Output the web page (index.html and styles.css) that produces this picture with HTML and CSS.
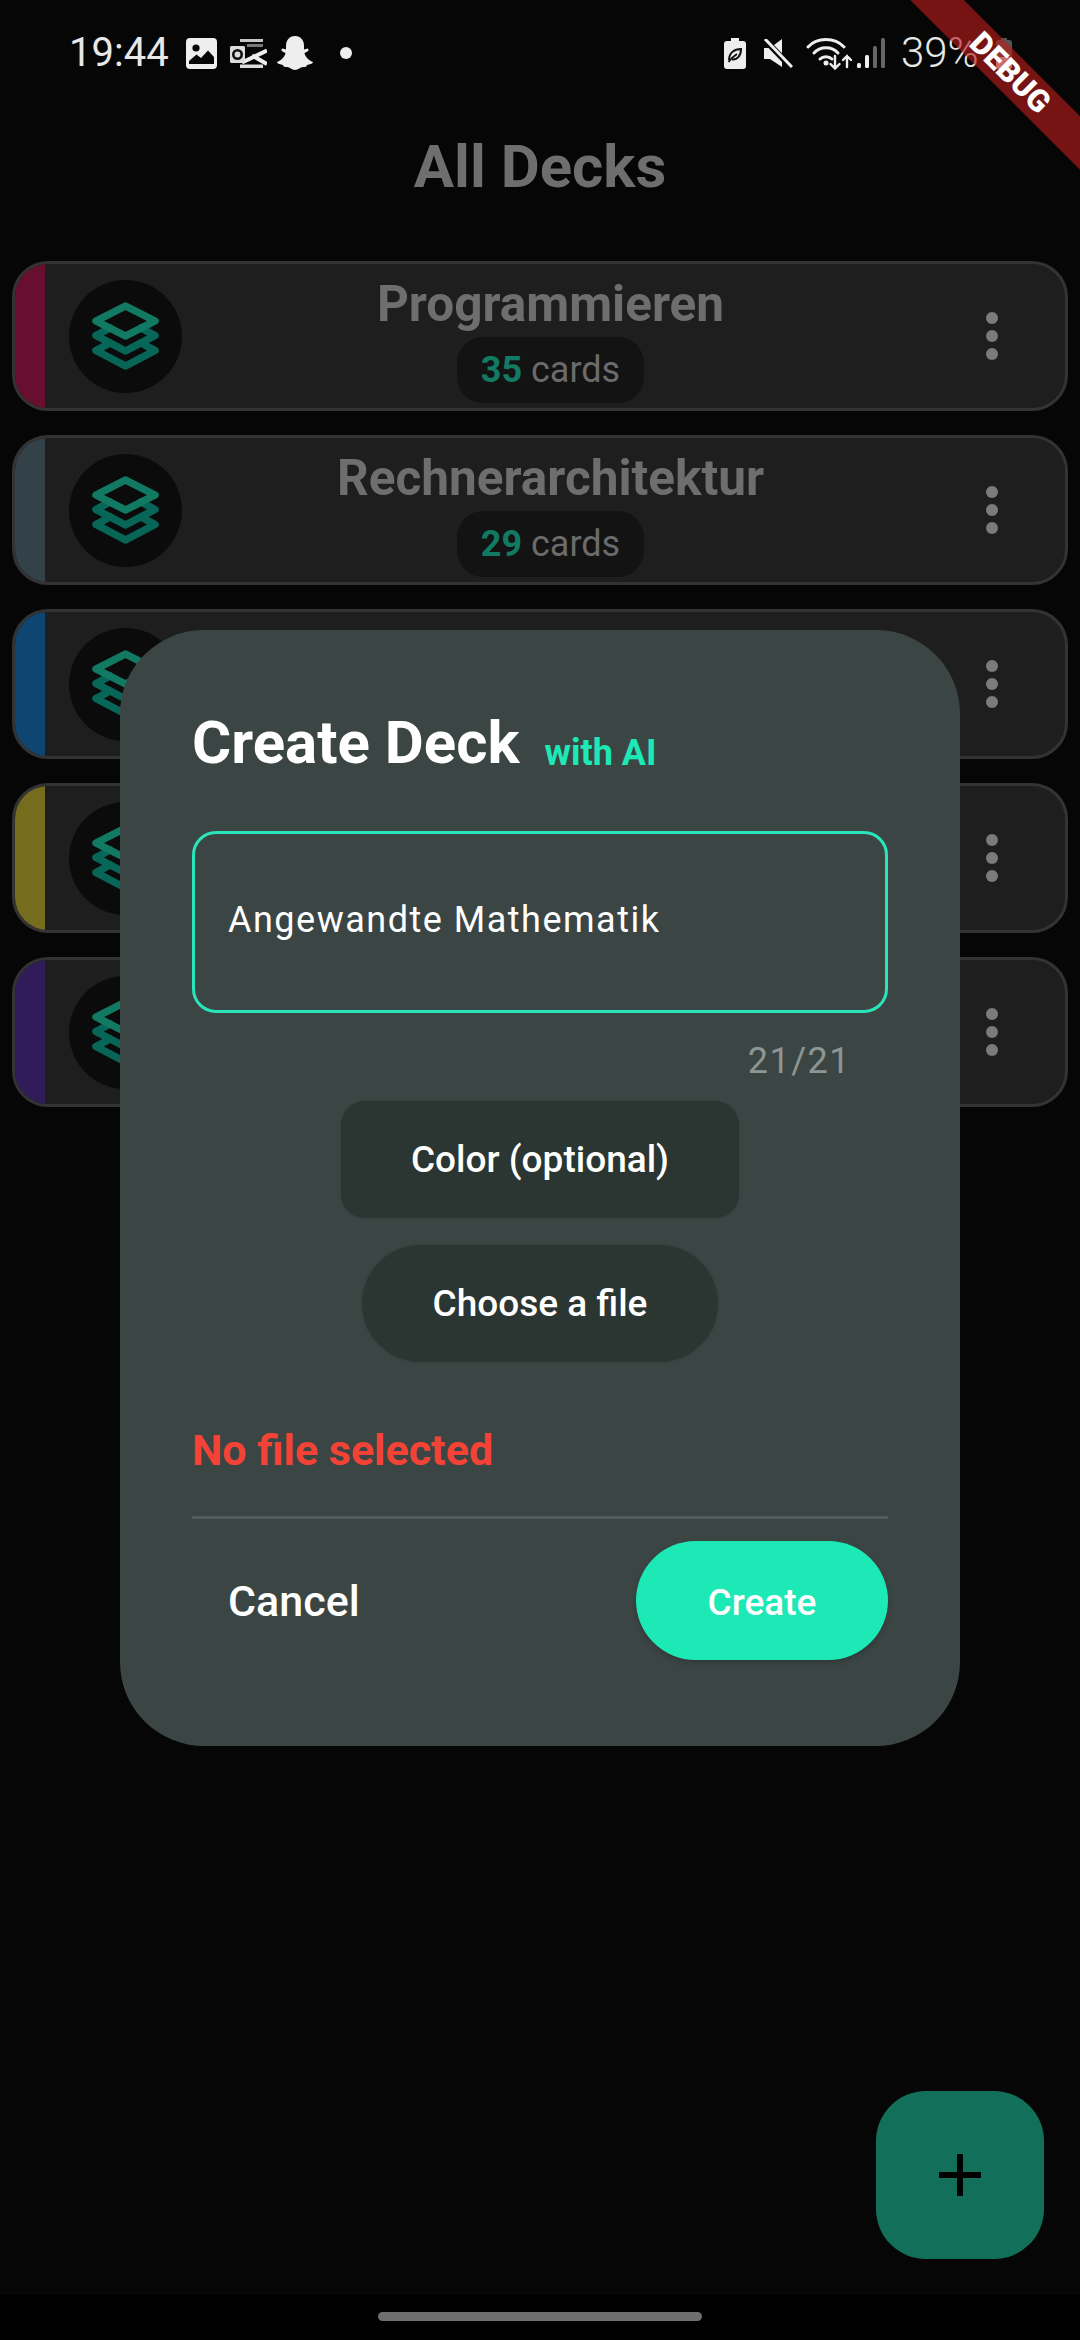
FILE: index.html
```html
<!DOCTYPE html>
<html lang="en">
<head>
<meta charset="utf-8">
<title>All Decks</title>
<link rel="stylesheet" href="styles.css">
</head>
<body>
<div class="screen">
  <header class="status">
    <div class="status-left">
      <span class="clock">19:44</span>
      <svg class="ic-gallery" viewBox="0 0 31 31"><rect width="31" height="31" rx="4" fill="#eee"/><circle cx="10" cy="10" r="3.6" fill="#060606"/><path d="M3 26 V23 L10.5 16.5 L15 20 L22 12.5 L28 19 V26 Z" fill="#060606"/></svg>
      <svg class="ic-outlook" viewBox="0 0 37 29"><path d="M10 0H33V3H10Z" fill="#c4c4c4"/><path d="M17 5H33V8H17Z" fill="#777"/><path d="M12 23.500L37 11.500M22 16.500L37 25" fill="none" stroke="#eee" stroke-width="4"/><path d="M10 25.500H33V29H10Z" fill="#ddd"/><rect y="7" width="15" height="17" rx="1.500" fill="#ddd"/><circle cx="7.500" cy="15.500" r="4.200" fill="none" stroke="#111" stroke-width="2.600"/></svg>
      <svg class="ic-snap" viewBox="0 0 36 34"><path d="M18 0C24 0 27 4.500 27 10V13.500L30.500 12.500C32 13 32 15 30 15.800L27.500 17C28 20.500 31 24 36 26C35.500 28 32.500 28.500 30 29C29.500 31 28.500 31 26 31C23 31 21.500 34 18 34C14.500 34 13 31 10 31C7.500 31 6.500 31 6 29C3.500 28.500 .5 28 0 26C5 24 8 20.500 8.500 17L6 15.800C4 15 4 13 5.500 12.500L9 13.500V10C9 4.500 12 0 18 0Z" fill="#eee"/></svg>
      <span class="note-dot"></span>
    </div>
    <div class="status-right">
      <svg class="ic-leaf" viewBox="0 0 22 31"><path d="M7 0H15V3H19C21 3 22 4 22 6V28C22 30 21 31 19 31H3C1 31 0 30 0 28V6C0 4 1 3 3 3H7Z" fill="#eee"/><path d="M5 22C5 15 10 11 17 11C17 18 13 22 8 21.500M4.500 24C7 20 10 18 13 16" fill="none" stroke="#111" stroke-width="2"/></svg>
      <svg class="ic-mute" viewBox="0 0 30 29"><path d="M1 9H7L19 0V28L7 20H1Z" fill="#eee"/><path d="M2 1L28 28" stroke="#060606" stroke-width="6"/><path d="M2 0L29 28" stroke="#eee" stroke-width="3"/></svg>
      <svg class="ic-wifi" viewBox="0 0 46 33"><g fill="none" stroke="#eee" stroke-linecap="round"><path d="M2 10C11 0 29 0 38 10" stroke-width="3"/><path d="M8 16C14 9 26 9 32 16" stroke-width="3"/><path d="M14 22C17 19 23 19 26 22" stroke-width="3"/><path d="M29 19V31M24.500 27L29 31.500L33.500 27M41 30V19M37 23L41 19L45 23" stroke-width="2.400"/></g><circle cx="20" cy="26" r="2.500" fill="#eee"/></svg>
      <svg class="ic-signal" viewBox="0 0 28 30"><rect y="25" width="4" height="5" rx="1.500" fill="#eee"/><rect x="8" y="17" width="4" height="13" rx="1.500" fill="#eee"/><rect x="16" y="8" width="4" height="22" rx="1.500" fill="#666"/><rect x="24" width="4" height="30" rx="1.500" fill="#666"/></svg>
      <span class="percent">39%</span>
      <svg class="ic-battery" viewBox="0 0 16 31"><path d="M5 0H11V2H13C15 2 16 3 16 5V28C16 30 15 31 13 31H3C1 31 0 30 0 28V5C0 3 1 2 3 2H5Z" fill="#555"/><path d="M0 19H16V28C16 30 15 31 13 31H3C1 31 0 30 0 28Z" fill="#eee"/></svg>
    </div>
  </header>

  <h1 class="page-title">All Decks</h1>

  <main class="deck-list">
    <article class="deck">
      <div class="stripe stripe-magenta"></div>
      <div class="deck-icon"><svg viewBox="0 0 67 68"><use href="#stack"/></svg></div>
      <div class="deck-info">
        <h2 class="deck-name">Programmieren</h2>
        <div class="count"><b>35</b> cards</div>
      </div>
      <div class="menu"><i></i><i></i><i></i></div>
    </article>
    <article class="deck">
      <div class="stripe stripe-slate"></div>
      <div class="deck-icon"><svg viewBox="0 0 67 68"><use href="#stack"/></svg></div>
      <div class="deck-info">
        <h2 class="deck-name">Rechnerarchitektur</h2>
        <div class="count"><b>29</b> cards</div>
      </div>
      <div class="menu"><i></i><i></i><i></i></div>
    </article>
    <article class="deck">
      <div class="stripe stripe-blue"></div>
      <div class="deck-icon"><svg viewBox="0 0 67 68"><use href="#stack"/></svg></div>
      <div class="deck-info"></div>
      <div class="menu"><i></i><i></i><i></i></div>
    </article>
    <article class="deck">
      <div class="stripe stripe-olive"></div>
      <div class="deck-icon"><svg viewBox="0 0 67 68"><use href="#stack"/></svg></div>
      <div class="deck-info"></div>
      <div class="menu"><i></i><i></i><i></i></div>
    </article>
    <article class="deck">
      <div class="stripe stripe-purple"></div>
      <div class="deck-icon"><svg viewBox="0 0 67 68"><use href="#stack"/></svg></div>
      <div class="deck-info"></div>
      <div class="menu"><i></i><i></i><i></i></div>
    </article>
  </main>

  <footer class="nav-bar"><span class="home-pill"></span></footer>

  <button class="fab"><svg viewBox="0 0 42 42"><path d="M21 0V42M0 21H42" stroke="#000" stroke-width="6"/></svg></button>

  <section class="dialog">
    <div class="dialog-head">
      <span class="dialog-title">Create Deck</span>
      <span class="dialog-ai">with AI</span>
    </div>
    <div class="field"><span class="field-text">Angewandte Mathematik</span></div>
    <div class="counter">21/21</div>
    <div class="btn btn-color">Color (optional)</div>
    <div class="btn btn-file">Choose a file</div>
    <div class="file-error">No file selected</div>
    <div class="divider"></div>
    <div class="actions">
      <span class="cancel">Cancel</span>
      <span class="create">Create</span>
    </div>
  </section>

  <div class="debug-band">DEBUG</div>
</div>

<svg class="defs" width="0" height="0">
  <defs>
    <g id="stack" fill="none" stroke-width="7.500" stroke-linejoin="round" stroke-linecap="round">
      <path d="M18 41L4 48.500L33.500 64L63 48.500L49 41" stroke="#086659"/>
      <path d="M18 26L4 33.500L33.500 49L63 33.500L49 26" stroke="#086659"/>
      <path d="M33.500 4L63 19L33.500 34L4 19Z" stroke="#127a62"/>
    </g>
  </defs>
</svg>
</body>
</html>
```
FILE: styles.css
```css
* { box-sizing: border-box; }
html, body { margin: 0; padding: 0; background: #060606; }
body { font-family: Roboto, "Liberation Sans", sans-serif; }

.screen {
  position: relative;
  width: 1080px;
  height: 2340px;
  overflow: hidden;
  background: #060606;
  display: flex;
  flex-direction: column;
}

/* status bar */
.status {
  height: 106px;
  padding: 31px 68px 0 69px;
  display: flex;
  justify-content: space-between;
  align-items: flex-start;
  color: #e8e8e8;
}
.status-left, .status-right { display: flex; align-items: center; height: 44px; }
.clock { font-size: 40px; line-height: 44px; font-weight: 400; width: 117px; }
.percent { font-size: 42px; line-height: 44px; font-weight: 300; margin-left: 16px; width: 95px; }
.ic-gallery { width: 31px; height: 31px; }
.ic-outlook { width: 37px; height: 29px; margin-left: 13px; }
.ic-snap { width: 36px; height: 34px; margin-left: 10px; }
.note-dot { width: 12px; height: 12px; border-radius: 50%; background: #eee; margin-left: 27px; }
.ic-leaf { width: 22px; height: 31px; }
.ic-mute { width: 30px; height: 29px; margin-left: 17px; }
.ic-wifi { width: 46px; height: 33px; margin-left: 13px; }
.ic-signal { width: 28px; height: 30px; margin-left: 5px; }
.ic-battery { width: 16px; height: 31px; }

/* page */
.page-title {
  margin: 26px 0 0;
  height: 70px;
  font-size: 60px;
  line-height: 70px;
  font-weight: 700;
  color: #6e6e6e;
  text-align: center;
  width: 1080px;
}
.deck-list {
  flex: 1;
  padding: 59px 12px 0;
  display: flex;
  flex-direction: column;
  gap: 24px;
}
.deck {
  height: 150px;
  border: 3px solid #333;
  border-radius: 36px;
  background: #1e1e1e;
  overflow: hidden;
  display: flex;
  align-items: center;
}
.stripe { width: 30px; align-self: stretch; }
.stripe-magenta { background: #680f30; }
.stripe-slate { background: #334149; }
.stripe-blue { background: #0f4671; }
.stripe-olive { background: #756c1e; }
.stripe-purple { background: #2f1c58; }
.deck-icon {
  width: 113px;
  height: 113px;
  margin-left: 24px;
  border-radius: 50%;
  background: #0b0b0b;
  display: flex;
  align-items: center;
  justify-content: center;
}
.deck-icon svg { width: 67px; height: 68px; }
.deck-info {
  flex: 1;
  align-self: stretch;
  padding-top: 12px;
  display: flex;
  flex-direction: column;
  align-items: center;
}
.deck-name {
  margin: 0;
  font-size: 49.500px;
  line-height: 56px;
  font-weight: 700;
  color: #6e6e6e;
  white-space: nowrap;
}
.count {
  margin-top: 5px;
  height: 66px;
  padding: 0 24px;
  border-radius: 26px;
  background: #131313;
  color: #6b6b6b;
  font-size: 36px;
  line-height: 66px;
  white-space: nowrap;
}
.count b { color: #127a62; font-weight: 700; }
.menu {
  width: 146px;
  display: flex;
  flex-direction: column;
  align-items: center;
  gap: 6px;
}
.menu i { width: 12px; height: 12px; border-radius: 50%; background: #7b7b7b; }

/* nav */
.nav-bar {
  height: 45px;
  background: #000;
  display: flex;
  justify-content: center;
  padding-top: 17px;
}
.home-pill { width: 324px; height: 9px; border-radius: 5px; background: #6e6e6e; }

/* overlays */
.fab {
  position: absolute;
  left: 876px;
  top: 2091px;
  width: 168px;
  height: 168px;
  padding: 0;
  border: 0;
  border-radius: 50px;
  background: #12705a;
  display: flex;
  align-items: center;
  justify-content: center;
}
.fab svg { width: 42px; height: 42px; }

.dialog {
  position: absolute;
  left: 120px;
  top: 630px;
  width: 840px;
  height: 1116px;
  padding: 78px 72px 0;
  border-radius: 84px;
  background: #3b4644;
  display: flex;
  flex-direction: column;
}
.dialog-head { display: flex; align-items: flex-start; gap: 25px; height: 70px; }
.dialog-title { font-size: 60px; line-height: 70px; font-weight: 700; color: #fff; }
.dialog-ai { margin-top: 24px; font-size: 36px; line-height: 42px; font-weight: 700; color: #1de9b6; }
.field {
  margin-top: 53px;
  height: 182px;
  border: 3px solid #2ae4ba;
  border-radius: 24px;
  padding: 0 33px 4px;
  display: flex;
  align-items: center;
}
.field-text { font-size: 36px; letter-spacing: 1.500px; color: #fff; }
.counter {
  margin-top: 27px;
  padding-right: 37px;
  height: 42px;
  font-size: 36px;
  line-height: 42px;
  letter-spacing: 1.500px;
  text-align: right;
  color: #8c9694;
}
.btn {
  align-self: center;
  height: 117px;
  display: flex;
  align-items: center;
  justify-content: center;
  background: #2b3532;
  color: #fff;
  font-size: 37px;
  font-weight: 500;
  box-shadow: 0 0 3px rgba(0,0,0,.15);
}
.btn-color { margin-top: 19px; width: 398px; border-radius: 24px; }
.btn-file { margin-top: 27px; width: 356px; border-radius: 59px; }
.file-error {
  margin-top: 63px;
  height: 50px;
  font-size: 43px;
  line-height: 50px;
  font-weight: 700;
  color: #f44336;
}
.divider { margin-top: 41px; height: 3px; background: #525c5a; }
.actions {
  margin-top: 22px;
  display: flex;
  justify-content: space-between;
  align-items: center;
}
.cancel { padding-left: 36px; font-size: 43px; font-weight: 500; color: #fff; }
.create {
  width: 252px;
  height: 119px;
  padding-top: 3px;
  border-radius: 60px;
  background: #1de9b6;
  color: #fff;
  font-size: 37px;
  font-weight: 500;
  display: flex;
  align-items: center;
  justify-content: center;
  box-shadow: 0 3px 6px rgba(0,0,0,.2);
}

.debug-band {
  position: absolute;
  left: 810px;
  top: 54px;
  width: 400px;
  height: 38px;
  transform: rotate(45deg);
  background: rgba(183, 28, 28, .63);
  color: #fff;
  font-size: 31px;
  line-height: 38px;
  font-weight: 900;
  text-align: center;
}
.defs { position: absolute; }
```
